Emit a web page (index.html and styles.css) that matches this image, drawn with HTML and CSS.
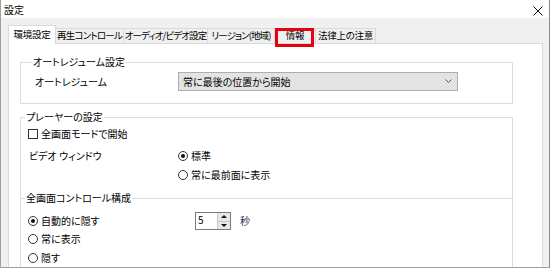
FILE: index.html
```html
<!DOCTYPE html>
<html lang="ja">
<head>
  <meta charset="UTF-8">
  <title>設定</title>
  <link rel="stylesheet" href="styles.css">
</head>
<body>
  <div class="window">
    <div class="titlebar">
      <span class="title">設定</span>
      <svg class="close" width="10" height="10" viewBox="0 0 10 10">
        <path d="M0.5 0.5 L9.5 9.5 M9.5 0.5 L0.5 9.5" stroke="#111" stroke-width="1" fill="none"/>
      </svg>
    </div>
    <div class="dialog">
      <div class="tabs">
        <div class="tab active t1">環境設定</div>
        <div class="tab t2">再生コントロール</div>
        <div class="tab t3">オーディオ/ビデオ設定</div>
        <div class="tab t4">リージョン(地域)</div>
        <div class="tab t5 marked">情報</div>
        <div class="tab t6">法律上の注意</div>
      </div>
      <div class="panel">
        <fieldset class="group g1">
          <legend>オートレジューム設定</legend>
          <div class="row">
            <span class="label-wide">オートレジューム</span>
            <div class="combo">
              <span>常に最後の位置から開始</span>
              <svg width="7" height="5" viewBox="0 0 7 5">
                <path d="M0.5 0.5 L3.5 3.5 L6.5 0.5" stroke="#555" fill="none"/>
              </svg>
            </div>
          </div>
        </fieldset>

        <fieldset class="group g2">
          <legend>プレーヤーの設定</legend>
          <div class="row small">
            <span class="check"></span>
            <span>全画面モードで開始</span>
          </div>
          <div class="row top video">
            <span class="label-mid">ビデオ ウィンドウ</span>
            <div class="options">
              <div class="row small"><span class="radio on"></span><span>標準</span></div>
              <div class="row small"><span class="radio"></span><span>常に最前面に表示</span></div>
            </div>
          </div>
        </fieldset>

        <fieldset class="group g3">
          <legend>全画面コントロール構成</legend>
          <div class="row spin-row">
            <div class="row small label-spin"><span class="radio on"></span><span>自動的に隠す</span></div>
            <div class="spin">
              <span class="spin-value">5</span>
              <div class="spin-buttons">
                <div class="spin-btn"><span class="arrow up"></span></div>
                <div class="spin-btn"><span class="arrow down"></span></div>
              </div>
            </div>
            <span class="unit">秒</span>
          </div>
          <div class="row small r2"><span class="radio"></span><span>常に表示</span></div>
          <div class="row small r3"><span class="radio"></span><span>隠す</span></div>
        </fieldset>
      </div>
    </div>
  </div>
</body>
</html>
```

FILE: styles.css
```css
body {
  margin: 0;
  width: 550px;
  height: 269px;
  overflow: hidden;
  background: #ffffff;
  font-family: "Noto Sans CJK JP", "Noto Sans", sans-serif;
  font-size: 10px;
  font-feature-settings: "palt";
  color: #000;
}

.window {
  width: 550px;
  height: 268px;
  box-sizing: border-box;
  border-left: 1px solid #a0a0a0;
  border-right: 1px solid #8a8a8a;
  border-bottom: 1px solid #a0a0a0;
  overflow: hidden;
  display: flex;
  flex-direction: column;
}

.titlebar {
  height: 18px;
  flex: none;
  background: #ffffff;
  display: flex;
  align-items: center;
  justify-content: space-between;
  padding: 0 6px 0 3px;
}

.title {
  line-height: 12px;
  margin-top: 1px;
}

.close {
  margin-top: 4px;
}

.dialog {
  flex: 1;
  background: #f0f0f0;
  padding: 7px 6px 0 7px;
  display: flex;
  flex-direction: column;
}

.tabs {
  display: flex;
  align-items: flex-end;
  height: 18px;
  flex: none;
}

.tab {
  box-sizing: border-box;
  height: 15px;
  line-height: 13px;
  text-align: center;
  border: 1px solid #d9d9d9;
  border-bottom: none;
  margin-right: -1px;
  background: #f0f0f0;
  white-space: nowrap;
  font-size: 9.5px;
  letter-spacing: -0.3px;
}

.tab.active {
  height: 19px;
  line-height: 17px;
  margin-bottom: -1px;
  background: #ffffff;
  position: relative;
  z-index: 1;
}

.t1 { width: 48px; }
.t2 { width: 69px; letter-spacing: -0.8px; }
.t3 { width: 85px; letter-spacing: -0.9px; }
.t4 { width: 68px; letter-spacing: -0.9px; }
.t5 { width: 42px; }
.t6 { width: 61px; }

.marked {
  position: relative;
}

.marked::after {
  content: "";
  position: absolute;
  left: 0;
  right: 1px;
  top: -1px;
  bottom: -4px;
  border: 3px solid #e60012;
  z-index: 2;
}

.panel {
  flex: 1;
  background: #ffffff;
  border: 1px solid #d9d9d9;
  padding: 12px 0 0 11px;
}

.group {
  width: 493px;
  box-sizing: border-box;
  margin: 0;
  padding: 0 0 0 7px;
  border: 1px solid #dcdcdc;
  min-width: 0;
}

.group legend {
  line-height: 12px;
  padding: 0 1px;
  margin-left: -3px;
  background: #ffffff;
}

.row {
  display: flex;
  align-items: center;
}

.row.small {
  height: 14px;
  line-height: 14px;
  gap: 3px;
}

.row.top {
  align-items: flex-start;
}

.g1 {
  padding: 4px 0 12px 14px;
}

.label-wide {
  width: 143px;
  line-height: 14px;
}

.combo {
  box-sizing: border-box;
  width: 280px;
  height: 19px;
  background: #e3e3e3;
  border: 1px solid #adadad;
  display: flex;
  align-items: center;
  justify-content: space-between;
  padding: 0 5px 0 4px;
  line-height: 14px;
}

.g2 {
  margin-top: 7px;
  padding-top: 4px;
  padding-bottom: 16px;
}

.video {
  margin-top: 8px;
}

.label-mid {
  width: 150px;
  line-height: 14px;
  padding-left: 1px;
  box-sizing: border-box;
}

.options {
  display: flex;
  flex-direction: column;
  gap: 5px;
}

.check {
  box-sizing: border-box;
  width: 10px;
  height: 10px;
  border: 1px solid #333;
  background: #fff;
}

.radio {
  box-sizing: border-box;
  width: 10px;
  height: 10px;
  border: 1px solid #333;
  border-radius: 50%;
  background: #fff;
  display: flex;
  align-items: center;
  justify-content: center;
}

.radio.on::after {
  content: "";
  width: 4px;
  height: 4px;
  border-radius: 50%;
  background: #111;
}

.g3 {
  margin-top: -7px;
  padding-top: 8px;
  padding-bottom: 20px;
}

.spin-row {
  height: 18px;
}

.label-spin {
  width: 167px;
}

.spin {
  box-sizing: border-box;
  width: 36px;
  height: 18px;
  border: 1px solid #7a7a7a;
  background: #fff;
  display: flex;
  justify-content: space-between;
}

.spin-value {
  line-height: 14px;
  padding-left: 2px;
}

.spin-buttons {
  width: 12px;
  display: flex;
  flex-direction: column;
  border-left: 1px solid #c8c8c8;
}

.spin-btn {
  flex: 1;
  background: #e8e8e8;
  display: flex;
  align-items: center;
  justify-content: center;
}

.spin-btn + .spin-btn {
  border-top: 1px solid #c8c8c8;
}

.arrow {
  width: 0;
  height: 0;
  border-left: 3px solid transparent;
  border-right: 3px solid transparent;
}

.arrow.up {
  border-bottom: 3px solid #111;
}

.arrow.down {
  border-top: 3px solid #111;
}

.unit {
  margin-left: 9px;
  line-height: 14px;
  color: #1c2b57;
}

.r2 {
  margin-top: 2px;
}

.r3 {
  margin-top: 5px;
}
```
